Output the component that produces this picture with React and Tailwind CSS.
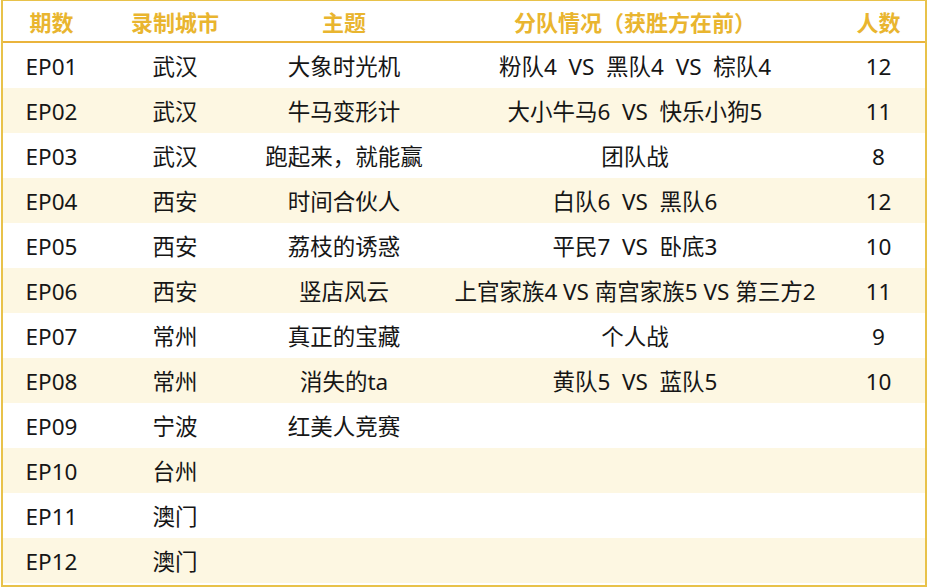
const rows = [
  ["EP01", "武汉", "大象时光机", "粉队4  VS  黑队4  VS  棕队4", "12"],
  ["EP02", "武汉", "牛马变形计", "大小牛马6  VS  快乐小狗5", "11"],
  ["EP03", "武汉", "跑起来，就能赢", "团队战", "8"],
  ["EP04", "西安", "时间合伙人", "白队6  VS  黑队6", "12"],
  ["EP05", "西安", "荔枝的诱惑", "平民7  VS  卧底3", "10"],
  ["EP06", "西安", "竖店风云", "上官家族4 VS 南宫家族5 VS 第三方2", "11"],
  ["EP07", "常州", "真正的宝藏", "个人战", "9"],
  ["EP08", "常州", "消失的ta", "黄队5  VS  蓝队5", "10"],
  ["EP09", "宁波", "红美人竞赛", "", ""],
  ["EP10", "台州", "", "", ""],
  ["EP11", "澳门", "", "", ""],
  ["EP12", "澳门", "", "", ""],
];

const headers = ["期数", "录制城市", "主题", "分队情况（获胜方在前）", "人数"];

const cols = "grid grid-cols-[97px_150px_188px_394px_93px]";

export default function App() {
  return (
    <div
      className="w-[929px] h-[587px] bg-white pl-[1px] pr-[2px] overflow-hidden"
      style={{ fontFamily: '"Noto Sans", "Noto Sans CJK SC", sans-serif' }}
    >
      <div className="h-full border-x-2 border-t border-b-2 border-[#e8c24a] flex flex-col">
        <div className={`${cols} h-[42px] items-center border-b-2 border-[#eab43c] text-[22px] font-bold text-[#e9b52f]`}>
          {headers.map((h) => (
            <div key={h} className="text-center leading-none pt-[2px]">{h}</div>
          ))}
        </div>
        {rows.map((r, i) => (
          <div
            key={r[0]}
            className={`${cols} h-[45px] items-center text-[22.5px] text-[#161616] ${i % 2 === 1 ? "bg-[#fdf7e2]" : "bg-white"}`}
          >
            {r.map((c, j) => (
              <div key={j} className="text-center whitespace-pre leading-none pt-[3px]">{c}</div>
            ))}
          </div>
        ))}
      </div>
    </div>
  );
}
